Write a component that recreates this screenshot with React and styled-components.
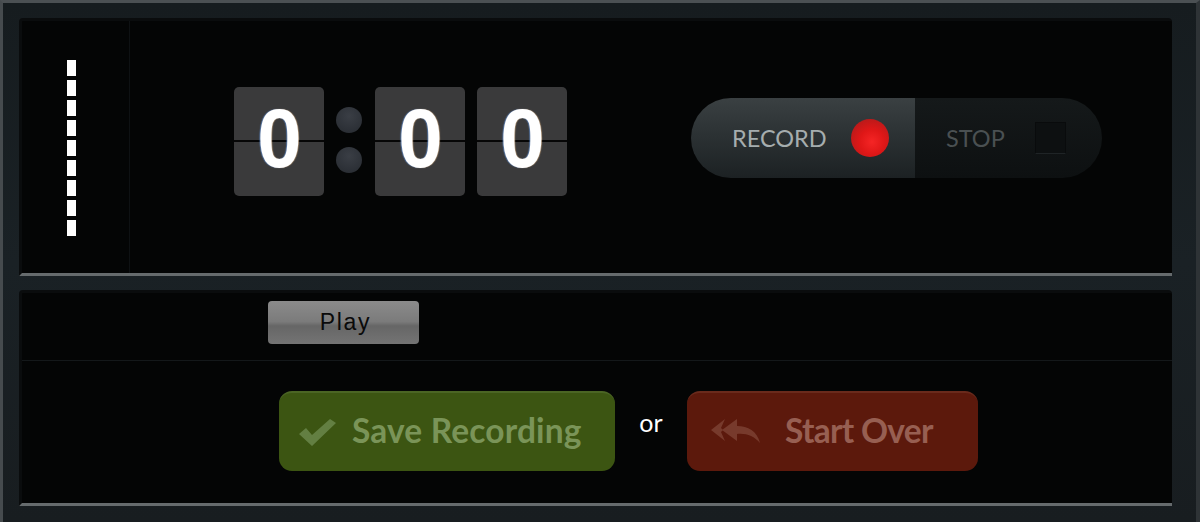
import React from "react";
import styled, { createGlobalStyle } from "styled-components";

const Global = createGlobalStyle`
  html, body { margin: 0; padding: 0; background: #171d20; }
  #root { width: 1200px; height: 522px; overflow: hidden; }
`;

const Frame = styled.div`
  box-sizing: border-box;
  width: 1200px;
  height: 522px;
  padding: 15px 25px 0 16px;
  background: linear-gradient(180deg, #161c1f 0%, #1a2125 50%, #181d20 100%);
  border-top: 3px solid #4b5053;
  border-left: 3px solid #464b4e;
  border-right: 4px solid #2e3336;
  display: flex;
  flex-direction: column;
  gap: 14px;
`;

const Panel = styled.section`
  box-sizing: border-box;
  width: 1153px;
  height: ${(p) => p.$h}px;
  background: #040505;
  border-top: 3px solid #0a0c0d;
  border-left: 3px solid #0a0c0d;
  border-bottom: 3px solid #666b6d;
  border-radius: 4px 4px 0 0;
  display: flex;
  flex-direction: ${(p) => (p.$column ? "column" : "row")};
`;

const MeterCell = styled.div`
  box-sizing: border-box;
  width: 108px;
  border-right: 1px solid #0e1113;
  padding: 39px 0 0 45px;
`;

const Meter = styled.div`
  display: flex;
  flex-direction: column;
  gap: 4px;
  width: 9px;
`;

const Segment = styled.span`
  display: block;
  height: 16px;
  background: #ffffff;
`;

const Timer = styled.div`
  display: flex;
  align-items: flex-start;
  padding: 66px 0 0 104px;
`;

const Digit = styled.div`
  position: relative;
  width: 90px;
  height: 109px;
  margin-right: ${(p) => p.$gap || 0}px;
  background: #3a3a3b;
  border-radius: 5px;
  color: #fff;
  font: 700 84px/103px "Liberation Sans", sans-serif;
  text-align: center;
  &::before {
    content: "";
    position: absolute;
    left: 0;
    right: 0;
    top: 53px;
    height: 2px;
    background: #060606;
  }
  & > span {
    position: relative;
    display: inline-block;
    transform: scaleX(.95);
    text-shadow: 1px 0 1px rgba(255, 205, 150, .55), -1px 0 1px rgba(110, 170, 255, .55);
  }
`;

const Colon = styled.div`
  width: 51px;
  height: 109px;
  padding: 20px 2px 0 0;
  box-sizing: border-box;
  display: flex;
  flex-direction: column;
  align-items: center;
  gap: 14px;
`;

const Dot = styled.span`
  width: 26px;
  height: 26px;
  border-radius: 50%;
  background: radial-gradient(circle at 50% 35%, #3a3e45 0%, #262a30 100%);
`;

const Pill = styled.div`
  display: flex;
  width: 411px;
  height: 80px;
  margin: 77px 0 0 124px;
  border-radius: 40px;
  overflow: hidden;
  font: 400 23.5px/80px Lato, sans-serif;
`;

const PillSide = styled.div`
  display: flex;
  align-items: center;
  box-sizing: border-box;
  height: 80px;
  width: ${(p) => p.$w}px;
  padding-left: ${(p) => p.$pad}px;
  background: ${(p) => p.$bg};
  color: ${(p) => p.$color};
`;

const Led = styled.span`
  width: 38px;
  height: 38px;
  margin-left: 24px;
  border-radius: 50%;
  background: radial-gradient(circle at 55% 60%, #f52525 0%, #df1717 40%, #b81a1a 78%, #8f3434 100%);
`;

const StopBox = styled.span`
  box-sizing: border-box;
  width: 31px;
  height: 32px;
  margin-left: 30px;
  background: #0d1011;
  border: 1px solid #090b0c;
  border-bottom-color: #1f2426;
`;

const PlayRow = styled.div`
  box-sizing: border-box;
  height: 68px;
  padding: 8px 0 0 246px;
  border-bottom: 1px solid #14181a;
`;

const PlayButton = styled.button`
  display: block;
  width: 151px;
  height: 43px;
  padding: 0 0 0 4px;
  border: 0;
  border-radius: 4px;
  background: linear-gradient(180deg, #8b8b8b 0%, #7b7b7b 48%, #666666 58%, #747474 100%);
  color: #0a0a0a;
  font: 400 23px/43px "Liberation Sans", sans-serif;
  letter-spacing: 1.7px;
`;

const ActionRow = styled.div`
  display: flex;
  align-items: flex-start;
  padding: 30px 0 0 257px;
`;

const ActionButton = styled.button`
  display: flex;
  align-items: center;
  box-sizing: border-box;
  width: ${(p) => p.$w}px;
  height: 80px;
  padding: 0 0 3px ${(p) => p.$pad}px;
  border: 0;
  border-top: 2px solid ${(p) => p.$edge};
  border-radius: 13px;
  background: ${(p) => p.$bg};
  color: ${(p) => p.$color};
  font: 700 33.5px/1 Lato, sans-serif;
  letter-spacing: ${(p) => p.$track || 0}px;
`;

const Or = styled.span`
  width: 72px;
  text-align: center;
  color: #fff;
  font: 400 25px/62px Lato, sans-serif;
`;

const ButtonIcon = styled.svg`
  flex: none;
  margin-right: ${(p) => p.$gap}px;
`;

export default function App() {
  return (
    <>
      <Global />
      <Frame>
        <Panel $h={258}>
          <MeterCell>
            <Meter>
              {Array.from({ length: 9 }, (_, i) => <Segment key={i} />)}
            </Meter>
          </MeterCell>
          <Timer>
            <Digit><span>0</span></Digit>
            <Colon><Dot /><Dot /></Colon>
            <Digit $gap={12}><span>0</span></Digit>
            <Digit><span>0</span></Digit>
          </Timer>
          <Pill>
            <PillSide $w={224} $pad={41} $bg="linear-gradient(180deg, #3a4042 0%, #2c3234 45%, #1c2123 100%)" $color="#a5adae">
              RECORD<Led />
            </PillSide>
            <PillSide $w={187} $pad={31} $bg="linear-gradient(180deg, #15191a 0%, #0d1011 100%)" $color="#4a5052">
              STOP<StopBox />
            </PillSide>
          </Pill>
        </Panel>
        <Panel $h={216} $column>
          <PlayRow><PlayButton>Play</PlayButton></PlayRow>
          <ActionRow>
            <ActionButton $w={336} $pad={18} $track={0.15} $bg="#3c5512" $edge="#4b6524" $color="#7a9458">
              <ButtonIcon $gap={15} width="40" height="34" viewBox="0 0 40 34">
                <path d="M2 20 L9 14 L15 21 L33 5 L39 9 L15 32 Z" fill="#637f42" />
              </ButtonIcon>
              Save Recording
            </ActionButton>
            <Or>or</Or>
            <ActionButton $w={291} $pad={23} $track={-0.7} $bg="#5c190c" $edge="#6a2a1c" $color="#975f52">
              <ButtonIcon $gap={24} width="51" height="26" viewBox="0 0 51 26">
                <path d="M15 1 L1 12 L15 23 L11 14 L13 12 L11 10 Z" fill="#773a2c" />
                <path d="M27 1 L12 12 L27 23 L27 16 C36 15 44 18 50 25 C47 13 38 8 27 8 Z" fill="#773a2c" />
              </ButtonIcon>
              Start Over
            </ActionButton>
          </ActionRow>
        </Panel>
      </Frame>
    </>
  );
}
